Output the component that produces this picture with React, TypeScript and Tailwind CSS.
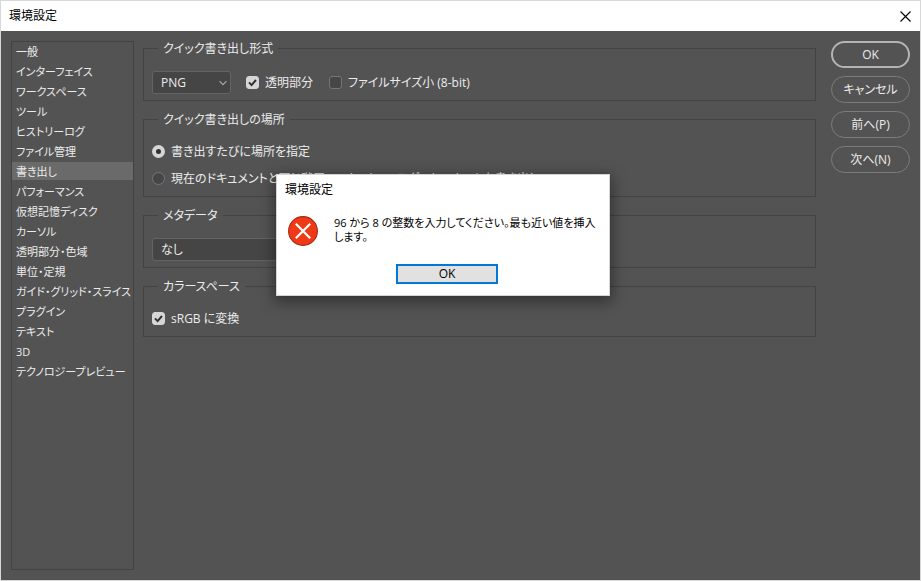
import { useState } from 'react';
import type { ReactNode } from 'react';

const categories = [
  '一般',
  'インターフェイス',
  'ワークスペース',
  'ツール',
  'ヒストリーログ',
  'ファイル管理',
  '書き出し',
  'パフォーマンス',
  '仮想記憶ディスク',
  'カーソル',
  '透明部分・色域',
  '単位・定規',
  'ガイド・グリッド・スライス',
  'プラグイン',
  'テキスト',
  '3D',
  'テクノロジープレビュー',
];

// ── Icons ────────────────────────────────────────────────────────────────
const IconClose = () => (
  <svg className="w-[11px] h-[11px]" viewBox="0 0 11 11" fill="none" stroke="currentColor" strokeWidth={1.1}>
    <path d="M0.5 0.5l10 10M10.5 0.5l-10 10" />
  </svg>
);

const IconChevron = () => (
  <svg className="pointer-events-none absolute right-1 top-2 w-2 h-2" viewBox="0 0 8 8" fill="none" stroke="#a8a8a8" strokeWidth={1.2}>
    <path d="M0.5 2.2L4 5.7l3.5-3.5" />
  </svg>
);

const IconCheck = () => (
  <svg className="pointer-events-none absolute inset-0 hidden w-[13px] h-[13px] peer-checked:block" viewBox="0 0 13 13" fill="none" stroke="#303030" strokeWidth={2}>
    <path d="M3 6.4l2.6 2.7L10 4" />
  </svg>
);

const IconError = () => (
  <svg className="w-[30px] h-[30px] shrink-0" viewBox="0 0 30 30" fill="none">
    <circle cx="15" cy="15" r="14.4" fill="#f03a17" stroke="#a82a12" strokeWidth={1.1} />
    <path d="M7.8 7.8l14.4 14.4M22.2 7.8L7.8 22.2" stroke="#fff" strokeWidth={2.2} />
  </svg>
);

// ── Form parts ───────────────────────────────────────────────────────────
function Group({ title, children }: { title: string; children: ReactNode }) {
  return (
    <fieldset className="min-w-0 border border-[#434343] px-2 pb-1">
      <legend className="ml-1.5 px-[5px] h-4 leading-[18px]">{title}</legend>
      {children}
    </fieldset>
  );
}

function Checkbox({ label, defaultChecked }: { label: string; defaultChecked?: boolean }) {
  return (
    <label className="flex items-center gap-1.5 h-[27px]">
      <span className="relative block w-[13px] h-[13px]">
        <input
          type="checkbox"
          defaultChecked={defaultChecked}
          className="peer block appearance-none w-[13px] h-[13px] rounded-[3px] border border-[#757575] bg-[#464646] checked:border-[#d6d6d6] checked:bg-[#d6d6d6]"
        />
        <IconCheck />
      </span>
      {label}
    </label>
  );
}

function Radio({ label, defaultChecked }: { label: string; defaultChecked?: boolean }) {
  return (
    <label className="flex items-center gap-1.5 h-[27px] whitespace-nowrap">
      <input
        type="radio"
        name="location"
        defaultChecked={defaultChecked}
        className="appearance-none w-[13px] h-[13px] rounded-full border border-[#757575] bg-[#464646] checked:border-4 checked:border-[#d6d6d6] checked:bg-[#303030]"
      />
      {label}
    </label>
  );
}

function Select({ label, options, width }: { label: string; options: string[]; width: string }) {
  return (
    <span className={`relative block ${width}`}>
      <select
        aria-label={label}
        className="block appearance-none w-full h-[23px] pl-2 pr-4 rounded-[3px] border border-[#646464] bg-[#454545]"
      >
        {options.map((o) => (
          <option key={o}>{o}</option>
        ))}
      </select>
      <IconChevron />
    </span>
  );
}

function AlertDialog({ onClose }: { onClose: () => void }) {
  return (
    <div
      role="alertdialog"
      aria-labelledby="alert-title"
      aria-describedby="alert-text"
      className="absolute left-[275px] top-[173px] w-[334px] border border-[#d4d4d4] bg-white text-xs text-black shadow-[0_4px_14px_2px_rgba(0,0,0,0.4)]"
    >
      <h2 id="alert-title" className="px-2 pt-[7px] leading-4">環境設定</h2>
      <div className="flex gap-4 pl-[11px] pr-2 pt-[18px]">
        <IconError />
        <p id="alert-text" className="text-[11px] leading-[14px]">
          96 から 8 の整数を入力してください。最も近い値を挿入します。
        </p>
      </div>
      <div className="flex justify-center pl-2 pt-[18px] pb-[11px]">
        <button onClick={onClose} className="w-[102px] h-5 border-2 border-[#0078d7] bg-[#e1e1e1] leading-4">
          OK
        </button>
      </div>
    </div>
  );
}

// ── Main window ──────────────────────────────────────────────────────────
export default function App() {
  const [current, setCurrent] = useState('書き出し');
  const [alertOpen, setAlertOpen] = useState(true);

  return (
    <div className="relative flex min-h-screen flex-col border border-[#d8d8d8] bg-[#535353] text-xs text-[#ececec] font-['Open_Sans','Noto_Sans_CJK_JP',sans-serif] [font-feature-settings:'palt']">
      <header className="flex h-[30px] items-center justify-between bg-white pl-2 pr-[9px] text-black">
        <h1>環境設定</h1>
        <button aria-label="閉じる">
          <IconClose />
        </button>
      </header>

      <div className="flex flex-1 px-[10px] pt-[10px] pb-[10px]">
        <nav className="w-[123px] shrink-0 border border-[#434343] text-[11px]">
          <ul className="flex flex-col gap-0.5">
            {categories.map((c) => (
              <li key={c}>
                <button
                  onClick={() => setCurrent(c)}
                  className={`block w-full h-[18px] pl-1 text-left leading-5 whitespace-nowrap ${c === current ? 'bg-[#6a6a6a]' : ''}`}
                >
                  {c}
                </button>
              </li>
            ))}
          </ul>
        </nav>

        <main className="-mt-px ml-[9px] mr-[15px] flex min-w-0 flex-1 flex-col gap-[10px]">
          <Group title="クイック書き出し形式">
            <div className="flex items-center pt-[13px]">
              <Select label="クイック書き出し形式" options={['PNG', 'JPG', 'GIF', 'SVG']} width="w-[79px]" />
              <div className="ml-[15px] flex gap-4">
                <Checkbox label="透明部分" defaultChecked />
                <Checkbox label="ファイルサイズ小 (8-bit)" />
              </div>
            </div>
          </Group>

          <Group title="クイック書き出しの場所">
            <div className="pt-[11px]">
              <Radio label="書き出すたびに場所を指定" defaultChecked />
              <Radio label="現在のドキュメントと同じ階層のアセットフォルダーにアセットを書き出し" />
            </div>
          </Group>

          <Group title="メタデータ">
            <div className="flex h-10 items-center pt-[13px]">
              <Select label="メタデータ" options={['なし', '著作権情報と問い合わせ先']} width="w-[360px]" />
            </div>
          </Group>

          <Group title="カラースペース">
            <div className="pt-[11px]">
              <Checkbox label="sRGB に変換" defaultChecked />
            </div>
          </Group>
        </main>

        <div className="flex w-[79px] shrink-0 flex-col gap-2">
          <button className="h-[27px] rounded-full border-2 border-[#b4b4b4]">OK</button>
          <button className="h-[27px] rounded-full border border-[#7c7c7c]">キャンセル</button>
          <button className="h-[27px] rounded-full border border-[#7c7c7c]">前へ(P)</button>
          <button className="h-[27px] rounded-full border border-[#7c7c7c]">次へ(N)</button>
        </div>
      </div>

      {alertOpen && <AlertDialog onClose={() => setAlertOpen(false)} />}
    </div>
  );
}
